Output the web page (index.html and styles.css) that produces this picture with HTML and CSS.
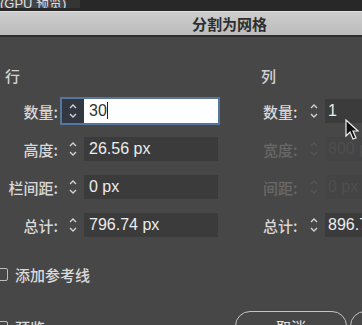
FILE: index.html
```html
<!DOCTYPE html>
<html lang="zh-CN">
<head>
    <meta charset="UTF-8">
    <meta name="viewport" content="width=device-width, initial-scale=1.0">
    <title>分割为网格</title>
    <link rel="stylesheet" href="styles.css">
</head>
<body>
    <div class="topbar">
        <div class="tab">(GPU 预览)</div>
    </div>
    <div class="titlebar">分割为网格</div>

    <div class="dialog">
        <div class="columns">
            <section class="group rows">
                <h3>行</h3>
                <div class="field focused">
                    <label>数量:</label>
                    <div class="box">
                        <span class="spin"><svg viewBox="0 0 10 18"><path d="M2 6 L5 3 L8 6 M2 12 L5 15 L8 12"/></svg></span>
                        <span class="value input">30<i class="caret"></i></span>
                    </div>
                </div>
                <div class="field">
                    <label>高度:</label>
                    <div class="box">
                        <span class="spin"><svg viewBox="0 0 10 18"><path d="M2 6 L5 3 L8 6 M2 12 L5 15 L8 12"/></svg></span>
                        <span class="value">26.56 px</span>
                    </div>
                </div>
                <div class="field">
                    <label>栏间距:</label>
                    <div class="box">
                        <span class="spin"><svg viewBox="0 0 10 18"><path d="M2 6 L5 3 L8 6 M2 12 L5 15 L8 12"/></svg></span>
                        <span class="value">0 px</span>
                    </div>
                </div>
                <div class="field">
                    <label>总计:</label>
                    <div class="box">
                        <span class="spin"><svg viewBox="0 0 10 18"><path d="M2 6 L5 3 L8 6 M2 12 L5 15 L8 12"/></svg></span>
                        <span class="value">796.74 px</span>
                    </div>
                </div>
            </section>

            <section class="group cols">
                <h3>列</h3>
                <div class="field">
                    <label>数量:</label>
                    <div class="box">
                        <span class="spin"><svg viewBox="0 0 10 18"><path d="M2 6 L5 3 L8 6 M2 12 L5 15 L8 12"/></svg></span>
                        <span class="value">1</span>
                    </div>
                </div>
                <div class="field disabled">
                    <label>宽度:</label>
                    <div class="box">
                        <span class="spin"><svg viewBox="0 0 10 18"><path d="M2 6 L5 3 L8 6 M2 12 L5 15 L8 12"/></svg></span>
                        <span class="value">800 px</span>
                    </div>
                </div>
                <div class="field disabled">
                    <label>间距:</label>
                    <div class="box">
                        <span class="spin"><svg viewBox="0 0 10 18"><path d="M2 6 L5 3 L8 6 M2 12 L5 15 L8 12"/></svg></span>
                        <span class="value">0 px</span>
                    </div>
                </div>
                <div class="field">
                    <label>总计:</label>
                    <div class="box">
                        <span class="spin"><svg viewBox="0 0 10 18"><path d="M2 6 L5 3 L8 6 M2 12 L5 15 L8 12"/></svg></span>
                        <span class="value">896.74 px</span>
                    </div>
                </div>
                <svg class="cursor" viewBox="0 0 14 22"><path d="M1 1 L1 17 L5 13 L8 20 L11 19 L8 12 L13 12 Z"/></svg>
            </section>
        </div>

        <div class="check guides">
            <span class="checkbox"></span>
            <span>添加参考线</span>
        </div>

        <div class="footer">
            <div class="check preview">
                <span class="checkbox checked"></span>
                <span>预览</span>
            </div>
            <div class="buttons">
                <button class="btn">取消</button>
                <button class="btn primary">确定</button>
            </div>
        </div>
    </div>
</body>
</html>
```

FILE: styles.css
```css
body {
    margin: 0;
    width: 362px;
    height: 325px;
    overflow: hidden;
    background-color: #474747;
    color: #d6d6d6;
    font-family: "Liberation Sans", "Noto Sans CJK SC", sans-serif;
}
.topbar {
    height: 11px;
    background-color: #282828;
    overflow: hidden;
}
.tab {
    width: 66px;
    height: 11px;
    background-color: #444;
    border-right: 14px solid #353535;
    color: #e0e0e0;
    font-size: 13px;
    line-height: 13px;
    margin-top: -4px;
    padding-top: 1px;
    white-space: nowrap;
    overflow: hidden;
}
.titlebar {
    height: 23px;
    border-top: 1px solid #dedede;
    border-bottom: 2px solid #2e2e2e;
    background: linear-gradient(#cdcdcd, #bcbcbc);
    color: #2e2e2e;
    font-family: "Noto Sans CJK SC", sans-serif;
    font-size: 15px;
    font-weight: bold;
    line-height: 23px;
    padding-left: 192px;
}
.dialog {
    padding-top: 29px;
}
.columns {
    display: grid;
    grid-template-columns: 213px 200px;
    column-gap: 43px;
    padding-left: 5px;
}
.group {
    position: relative;
    display: flex;
    flex-direction: column;
    gap: 14px;
}
.group h3 {
    margin: 0 0 -1px 0;
    height: 20px;
    font-family: "Noto Sans CJK SC", sans-serif;
    font-size: 15px;
    font-weight: 500;
    line-height: 20px;
    color: #d4d4d4;
}
.field {
    display: flex;
    align-items: center;
    height: 24px;
}
.field label {
    font-family: "Noto Sans CJK SC", sans-serif;
    font-size: 15px;
    font-weight: 500;
    color: #d8d8d8;
}
.rows .field label {
    width: 53px;
    padding-right: 4px;
    text-align: right;
}
.cols .field label {
    width: 39px;
    padding-left: 2px;
}
.box {
    display: flex;
    height: 24px;
}
.spin {
    width: 22px;
    height: 24px;
    display: flex;
    align-items: center;
    justify-content: center;
}
.spin svg {
    width: 10px;
    height: 18px;
    fill: none;
    stroke: #d2d2d2;
    stroke-width: 1.4;
}
.value {
    box-sizing: border-box;
    width: 134px;
    height: 24px;
    padding-left: 5px;
    background-color: #3b3b3b;
    color: #ececec;
    font-size: 16px;
    line-height: 24px;
    white-space: nowrap;
}
.cols .spin {
    width: 23px;
}
.cols .value {
    width: 60px;
    padding-left: 3px;
}
.focused .box {
    box-shadow: 0 0 0 2px #56769f;
}
.focused .spin {
    background-color: #323842;
}
.value.input {
    background-color: #fff;
    color: #333;
}
.caret {
    display: inline-block;
    width: 1px;
    height: 17px;
    background-color: #222;
    vertical-align: -3px;
}
.disabled label {
    color: #686868;
}
.disabled .spin svg {
    stroke: #555;
}
.disabled .value {
    background-color: #444;
    color: #4e4e4e;
}
.cursor {
    position: absolute;
    left: 84px;
    top: 53px;
    width: 14px;
    height: 22px;
    fill: #111;
    stroke: #eee;
    stroke-width: 1.2;
}
.check {
    display: flex;
    align-items: center;
    gap: 7px;
    height: 20px;
    font-family: "Noto Sans CJK SC", sans-serif;
    font-size: 15px;
    font-weight: 500;
    color: #dadada;
}
.guides {
    margin-top: 27px;
}
.checkbox {
    box-sizing: border-box;
    width: 13px;
    height: 13px;
    margin-left: -5px;
    border: 1px solid #bdbdbd;
    border-radius: 2px;
}
.checkbox.checked {
    background-color: #d0d0d0;
    box-shadow: inset 0 0 0 3px #474747;
}
.footer {
    display: flex;
    justify-content: space-between;
    align-items: flex-start;
    margin-top: 27px;
}
.preview {
    margin-top: 6px;
}
.buttons {
    display: flex;
    gap: 3px;
    margin-right: -100px;
}
.btn {
    width: 112px;
    height: 30px;
    border: 1.5px solid #c4c4c4;
    border-radius: 15px;
    background: transparent;
    color: #e4e4e4;
    font-family: "Noto Sans CJK SC", sans-serif;
    font-size: 15px;
    padding: 0;
}
```
